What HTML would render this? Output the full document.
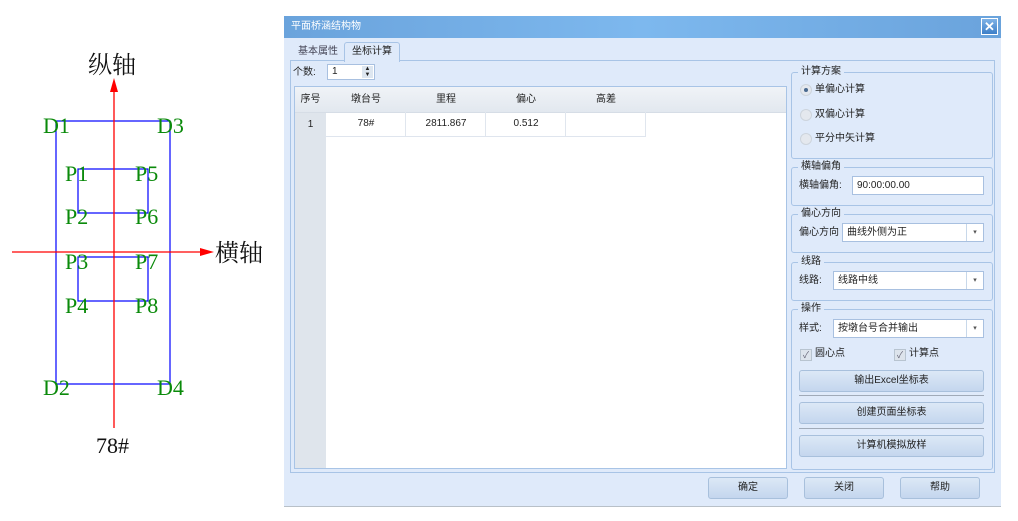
<!DOCTYPE html>
<html><head><meta charset="utf-8"><style>
body{margin:0;width:1018px;height:521px;background:#fff;position:relative;overflow:hidden;font-family:"Liberation Sans","Noto Sans CJK SC",sans-serif;font-size:10px;line-height:12px;color:#222}
.a{position:absolute}
.lbl{position:absolute;font-family:"Liberation Serif","Noto Serif CJK SC",serif;color:#0a8a0a;font-size:22px;line-height:22px}
.blk{position:absolute;font-family:"Liberation Serif","Noto Serif CJK SC",serif;color:#111;font-size:22px;line-height:22px}
.grp{position:absolute;border:1px solid #a8c4e6;border-radius:3px;left:791px;width:200px}
.gt{position:absolute;top:-7px;left:6px;background:#dfeafa;padding:0 3px;font-size:10px;line-height:12px}
.inp{position:absolute;background:#fff;border:1px solid #a8c0e0;height:19px;font-size:10px;line-height:17px;padding-left:4px;box-sizing:border-box}
.dd{position:absolute;right:0;top:0;width:16px;height:17px;border-left:1px solid #c8d8ea;text-align:center;font-size:7px;color:#555}
.btn{position:absolute;border:1px solid #a8c0dc;border-radius:3px;background:linear-gradient(#dce8f6,#c4d6ee);text-align:center;font-size:10px;line-height:20px;box-sizing:border-box;height:22px}
.rad{position:absolute;width:10px;height:10px;border-radius:50%;background:#e4e8ee;border:1px solid #cdd4dc}
.cb{position:absolute;width:10px;height:10px;background:#dde4ec;border:1px solid #b8c4d0;font-size:9px;line-height:10px;text-align:center;color:#667}
</style></head><body>
<svg class="a" style="left:0;top:0" width="280" height="521">
<g stroke="#0000ff" stroke-width="1.2" fill="none">
<rect x="56" y="121" width="114" height="263"/>
<rect x="78" y="169" width="70" height="44"/>
<rect x="78" y="257" width="70" height="44"/>
</g>
<g stroke="#ff0000" stroke-width="1.3">
<line x1="114" y1="86" x2="114" y2="428"/>
<line x1="12" y1="252" x2="202" y2="252"/>
</g>
<polygon points="114,78 110,92 118,92" fill="#ff0000"/>
<polygon points="214,252 200,248 200,256" fill="#ff0000"/>
</svg>
<div class="blk" style="left:88px;top:55px;font-size:24px">纵轴</div>
<div class="blk" style="left:215px;top:243px;font-size:24px">横轴</div>
<div class="blk" style="left:96px;top:435px">78#</div>
<div class="lbl" style="left:43px;top:115px">D1</div>
<div class="lbl" style="left:157px;top:115px">D3</div>
<div class="lbl" style="left:43px;top:377px">D2</div>
<div class="lbl" style="left:157px;top:377px">D4</div>
<div class="lbl" style="left:65px;top:163px">P1</div>
<div class="lbl" style="left:135px;top:163px">P5</div>
<div class="lbl" style="left:65px;top:206px">P2</div>
<div class="lbl" style="left:135px;top:206px">P6</div>
<div class="lbl" style="left:65px;top:251px">P3</div>
<div class="lbl" style="left:135px;top:251px">P7</div>
<div class="lbl" style="left:65px;top:295px">P4</div>
<div class="lbl" style="left:135px;top:295px">P8</div>

<div class="a" style="left:284px;top:16px;width:717px;height:490px;background:#dfeafa;border-bottom:1px solid #b8c0c8"></div>
<div class="a" style="left:284px;top:16px;width:717px;height:22px;background:linear-gradient(90deg,#6aa3dc,#7db8ee 50%,#6aa3dc);color:#fff;font-size:10px;line-height:22px;padding-left:7px;box-sizing:border-box">平面桥涵结构物</div>
<div class="a" style="left:981px;top:18px;width:17px;height:17px;background:linear-gradient(#7fb2e6,#3d7fc8);border:1px solid #fff;box-sizing:border-box;color:#fff;font-size:13px;line-height:15px;text-align:center;font-weight:bold">✕</div>
<div class="a" style="left:298px;top:46px;color:#445">基本属性</div>
<div class="a" style="left:344px;top:42px;width:54px;height:19px;background:#dfeafa;border:1px solid #a8c4e6;border-bottom:none;border-radius:3px 3px 0 0;line-height:18px;text-align:center;z-index:2">坐标计算</div>
<div class="a" style="left:290px;top:60px;width:705px;height:413px;border:1px solid #a8c4e6;box-sizing:border-box"></div>
<div class="a" style="left:293px;top:67px">个数:</div>
<div class="inp" style="left:327px;top:64px;width:48px;height:16px;line-height:14px">1<span style="position:absolute;right:1px;top:1px;width:11px;height:12px;background:#dde6f0;font-size:6px;line-height:6px;text-align:center">▲<br>▼</span></div>
<div class="a" style="left:294px;top:86px;width:493px;height:383px;background:#fff;border:1px solid #a8c4e6;box-sizing:border-box"></div>
<div class="a" style="left:295px;top:87px;width:31px;height:381px;background:#dfe5ec"></div>
<div class="a" style="left:295px;top:87px;width:491px;height:25px;background:linear-gradient(#f0f3f7,#e2e8ef);border-bottom:1px solid #d6dde6"></div>
<div class="a" style="left:295px;top:94px;width:31px;text-align:center">序号</div>
<div class="a" style="left:326px;top:94px;width:80px;text-align:center">墩台号</div>
<div class="a" style="left:406px;top:94px;width:80px;text-align:center">里程</div>
<div class="a" style="left:486px;top:94px;width:80px;text-align:center">偏心</div>
<div class="a" style="left:566px;top:94px;width:80px;text-align:center">高差</div>
<div class="a" style="left:326px;top:112px;width:320px;height:24px;border-bottom:1px solid #dfe5ee"></div>
<div class="a" style="left:405px;top:112px;width:1px;height:24px;background:#e0e6ee"></div>
<div class="a" style="left:485px;top:112px;width:1px;height:24px;background:#e0e6ee"></div>
<div class="a" style="left:565px;top:112px;width:1px;height:24px;background:#e0e6ee"></div>
<div class="a" style="left:645px;top:112px;width:1px;height:24px;background:#e0e6ee"></div>
<div class="a" style="left:295px;top:119px;width:31px;text-align:center">1</div>
<div class="a" style="left:326px;top:118px;width:80px;text-align:center">78#</div>
<div class="a" style="left:406px;top:118px;width:80px;text-align:center">2811.867</div>
<div class="a" style="left:486px;top:118px;width:80px;text-align:center">0.512</div>

<div class="grp" style="top:72px;height:85px"><div class="gt">计算方案</div></div>
<div class="rad" style="left:800px;top:84px"><div style="width:4px;height:4px;background:#4a6a90;border-radius:50%;margin:3px"></div></div>
<div class="a" style="left:815px;top:84px">单偏心计算</div>
<div class="rad" style="left:800px;top:109px"></div><div class="a" style="left:815px;top:109px">双偏心计算</div>
<div class="rad" style="left:800px;top:133px"></div><div class="a" style="left:815px;top:133px">平分中矢计算</div>

<div class="grp" style="top:167px;height:37px"><div class="gt">横轴偏角</div></div>
<div class="a" style="left:799px;top:180px">横轴偏角:</div>
<div class="inp" style="left:852px;top:176px;width:132px">90:00:00.00</div>

<div class="grp" style="top:214px;height:37px"><div class="gt">偏心方向</div></div>
<div class="a" style="left:799px;top:227px">偏心方向</div>
<div class="inp" style="left:842px;top:223px;width:142px">曲线外侧为正<div class="dd">▾</div></div>

<div class="grp" style="top:262px;height:37px"><div class="gt">线路</div></div>
<div class="a" style="left:799px;top:275px">线路:</div>
<div class="inp" style="left:833px;top:271px;width:151px">线路中线<div class="dd">▾</div></div>

<div class="grp" style="top:309px;height:159px"><div class="gt">操作</div></div>
<div class="a" style="left:799px;top:323px">样式:</div>
<div class="inp" style="left:833px;top:319px;width:151px">按墩台号合并输出<div class="dd">▾</div></div>
<div class="cb" style="left:800px;top:349px">✓</div><div class="a" style="left:815px;top:348px">圆心点</div>
<div class="cb" style="left:894px;top:349px">✓</div><div class="a" style="left:909px;top:348px">计算点</div>
<div class="btn" style="left:799px;top:370px;width:185px">输出Excel坐标表</div>
<div class="a" style="left:799px;top:395px;width:185px;height:1px;background:#a0aab8"></div>
<div class="btn" style="left:799px;top:402px;width:185px">创建页面坐标表</div>
<div class="a" style="left:799px;top:428px;width:185px;height:1px;background:#a0aab8"></div>
<div class="btn" style="left:799px;top:435px;width:185px">计算机模拟放样</div>

<div class="btn" style="left:708px;top:477px;width:80px">确定</div>
<div class="btn" style="left:804px;top:477px;width:80px">关闭</div>
<div class="btn" style="left:900px;top:477px;width:80px">帮助</div>
</body></html>
